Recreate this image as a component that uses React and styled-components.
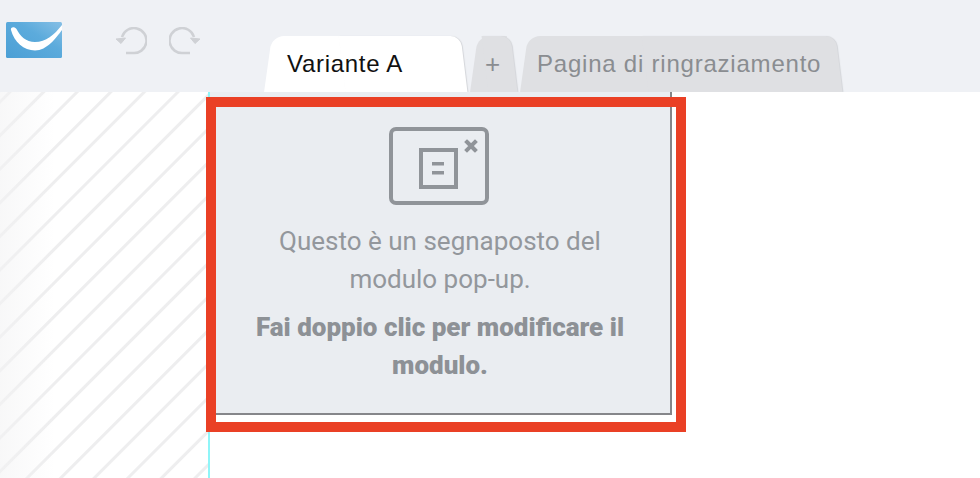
import React from "react";
import styled, { createGlobalStyle } from "styled-components";

const GlobalStyle = createGlobalStyle`
  html, body {
    margin: 0;
    padding: 0;
    height: 100%;
    background: #ffffff;
  }
  #root {
    height: 100%;
  }
`;

const Logo = () => (
  <LogoSvg viewBox="0 0 56 36">
    <defs>
      <linearGradient id="logoBlue" x1="0" y1="1" x2="1" y2="0">
        <stop offset="0" stopColor="#4b9fd5" />
        <stop offset="0.6" stopColor="#5cabdc" />
        <stop offset="1" stopColor="#86bfe5" />
      </linearGradient>
    </defs>
    <rect width="56" height="36" rx="1.500" fill="url(#logoBlue)" />
    <path
      d="M5 8C8 20 18 28.500 29 28.500 41 28.500 50 16 56 8L56 3C48 13 40 20 29 20 20 20 14 14 10.500 7 8.500 4 4 5 5 8Z"
      fill="#ffffff"
    />
  </LogoSvg>
);

const HistoryIcon = ({ flip }) => (
  <HistorySvg viewBox="0 0 32 28" $flip={flip}>
    <path d="M7 10A12.500 12.500 0 1 1 17.500 26L11 26" />
    <path d="M1 12L10.500 11 6 16.500Z" />
  </HistorySvg>
);

const PopupIcon = () => (
  <PopupSvg viewBox="0 0 100 78">
    <rect x="2" y="2" width="96" height="74" rx="5" fill="none" stroke="#909499" strokeWidth="4" />
    <rect x="32" y="23" width="35" height="37" fill="none" stroke="#909499" strokeWidth="4" />
    <rect x="43" y="35" width="12" height="3.500" fill="#909499" />
    <rect x="43" y="44" width="12" height="3.500" fill="#909499" />
    <path d="M78 15L86 23M86 15L78 23" stroke="#909499" strokeWidth="4" strokeLinecap="square" />
  </PopupSvg>
);

export default function App() {
  return (
    <>
      <GlobalStyle />
      <Page>
        <TopBar>
          <Logo />
          <History>
            <HistoryIcon />
            <HistoryIcon flip />
          </History>
          <Tabs>
            <Tab $active $width={204} $pad={23}>Variante A</Tab>
            <Tab $width={48} $pad={15} $small>+</Tab>
            <Tab $width={323} $pad={17}>Pagina di ringraziamento</Tab>
          </Tabs>
        </TopBar>
        <Canvas>
          <Gutter />
          <Stage>
            <PopupModule>
              <PopupIcon />
              <Message>Questo è un segnaposto del modulo pop-up.</Message>
              <Hint>Fai doppio clic per modificare il modulo.</Hint>
            </PopupModule>
          </Stage>
          <Highlight />
        </Canvas>
      </Page>
    </>
  );
}

const Page = styled.div`
  display: flex;
  flex-direction: column;
  width: 980px;
  height: 478px;
  overflow: hidden;
  font-family: "Liberation Sans", Arial, sans-serif;
`;

const TopBar = styled.header`
  display: flex;
  align-items: flex-start;
  height: 92px;
  flex: none;
  background: #eff1f5;
  padding-left: 6px;
  box-sizing: border-box;
`;

const LogoSvg = styled.svg`
  width: 56px;
  height: 36px;
  margin-top: 22px;
  flex: none;
`;

const History = styled.div`
  display: flex;
  gap: 22px;
  margin: 27px 0 0 53px;
  width: 149px;
  flex: none;
`;

const HistorySvg = styled.svg`
  width: 32px;
  height: 28px;
  transform: ${(p) => (p.$flip ? "scaleX(-1)" : "none")};
  fill: #cfd1d5;
  stroke: #cfd1d5;
  stroke-width: 2.500;

  path:first-child {
    fill: none;
  }

  path:last-child {
    stroke-width: 1;
  }
`;

const Tabs = styled.nav`
  display: flex;
  height: 56px;
  margin-top: 36px;
  gap: 2px;
`;

const Tab = styled.div`
  position: relative;
  z-index: 0;
  width: ${(p) => p.$width}px;
  display: flex;
  align-items: center;
  padding: 0 0 0 ${(p) => p.$pad}px;
  box-sizing: border-box;
  font-size: ${(p) => (p.$small ? "26px" : "24px")};
  letter-spacing: ${(p) => (p.$active ? "0.7px" : "0.78px")};
  color: ${(p) => (p.$active ? "#111111" : "#8a8d91")};

  &::before,
  &::after {
    content: "";
    position: absolute;
    z-index: -1;
    top: 0;
    bottom: 0;
    width: 60%;
    background: ${(p) => (p.$active ? "#ffffff" : "#dfe0e3")};
  }

  &::before {
    left: 4px;
    border-top-left-radius: 12px;
    transform: skewX(-8deg);
  }

  &::after {
    right: 4px;
    border-top-right-radius: 10px;
    transform: skewX(7deg);
    box-shadow: 1px 0 1px #d4d6da;
  }
`;

const Canvas = styled.main`
  position: relative;
  display: flex;
  flex: 1;
  min-height: 0;
`;

const Gutter = styled.div`
  width: 208px;
  flex: none;
  background-color: #ffffff;
  background-image: linear-gradient(90deg, rgba(243, 243, 244, 0.6), rgba(255, 255, 255, 0) 55px),
    repeating-linear-gradient(
      135deg,
      #ffffff 0,
      #ffffff 5px,
      #eeeeef 6px,
      #eeeeef 8px,
      #ffffff 9px,
      #ffffff 23.760px
    );
`;

const Stage = styled.div`
  flex: 1;
  border-left: 2px solid #8ff5f8;
  background: #ffffff;
`;

const PopupModule = styled.section`
  width: 462px;
  height: 323px;
  box-sizing: border-box;
  background: #eaedf1;
  border-right: 2px solid #85868a;
  border-bottom: 2px solid #85868a;
  padding: 35px 45px 0 42px;
  display: flex;
  flex-direction: column;
  align-items: center;
  text-align: center;
  font-family: Roboto, sans-serif;
  font-size: 26px;
  line-height: 37.500px;
  color: #93979c;
`;

const PopupSvg = styled.svg`
  width: 100px;
  height: 78px;
  flex: none;
`;

const Message = styled.p`
  margin: 18px 0 0;
  padding: 0 20px 0 23px;
`;

const Hint = styled.p`
  margin: 11px 0 0;
  padding-left: 3px;
  font-weight: 900;
  color: #8d9196;
`;

const Highlight = styled.div`
  position: absolute;
  left: 206px;
  top: 5px;
  width: 480px;
  height: 335px;
  box-sizing: border-box;
  border: 10px solid #ea4025;
  pointer-events: none;
`;
